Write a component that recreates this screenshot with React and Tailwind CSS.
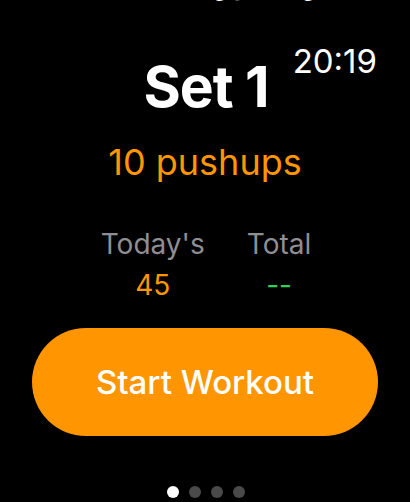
export default function App() {
  return (
    <div
      className="w-[410px] h-[502px] bg-black text-white overflow-hidden flex flex-col relative"
      style={{ fontFamily: "Inter, 'Noto Sans', sans-serif" }}
    >
      <div className="h-[7px] overflow-hidden relative">
        <div className="absolute left-[100px] bottom-[8px] text-[34px] font-bold leading-none whitespace-nowrap">
          Monday, May
        </div>
      </div>
      <span className="absolute right-[33px] top-[45px] text-[33px] leading-none">20:19</span>
      <div className="flex justify-center mt-[51px]">
        <span className="text-[57px] font-bold leading-none tracking-[-1px] ml-[2px]">Set 1</span>
      </div>
      <div className="flex justify-center mt-[29px]">
        <span className="text-[36px] leading-none text-[#ff9500]">10 pushups</span>
      </div>
      <div className="flex justify-center gap-[42px] mt-[50px] ml-[2px]">
        <div className="flex flex-col items-center">
          <span className="text-[28px] leading-none text-[#8e8e93]">Today's</span>
          <span className="text-[28px] leading-none text-[#ff9500] mt-[13px]">45</span>
        </div>
        <div className="flex flex-col items-center">
          <span className="text-[28px] leading-none text-[#8e8e93]">Total</span>
          <span className="text-[28px] leading-none text-[#30d158] mt-[13px]">--</span>
        </div>
      </div>
      <div className="px-[32px] mt-[29px]">
        <div className="h-[108px] rounded-[54px] bg-[#ff9500] flex items-center justify-center">
          <span className="text-[33px] font-medium leading-none">Start Workout</span>
        </div>
      </div>
      <div className="flex justify-center gap-[10px] mt-[50px] ml-[2px]">
        <div className="w-[12px] h-[12px] rounded-full bg-white" />
        <div className="w-[12px] h-[12px] rounded-full bg-[#4a4a4a]" />
        <div className="w-[12px] h-[12px] rounded-full bg-[#4a4a4a]" />
        <div className="w-[12px] h-[12px] rounded-full bg-[#4a4a4a]" />
      </div>
    </div>
  );
}
